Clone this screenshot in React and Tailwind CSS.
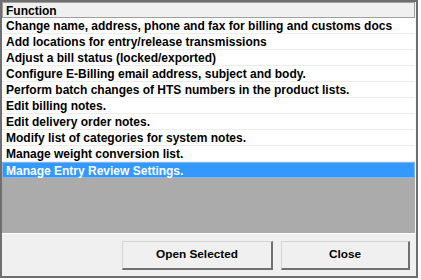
export default function App() {
  const rows = [
    "Change name, address, phone and fax for billing and customs docs",
    "Add locations for entry/release transmissions",
    "Adjust a bill status (locked/exported)",
    "Configure E-Billing email address, subject and body.",
    "Perform batch changes of HTS numbers in the product lists.",
    "Edit billing notes.",
    "Edit delivery order notes.",
    "Modify list of categories for system notes.",
    "Manage weight conversion list.",
    "Manage Entry Review Settings.",
  ];
  const font = { fontFamily: "Tahoma, 'Liberation Sans', 'DejaVu Sans', sans-serif" };
  return (
    <div className="w-[421px] h-[280px] bg-white">
      <div
        className="w-[418px] h-[278px] border-2 border-[#6f6f6f] bg-[#f0f0f0] flex flex-col text-[12px] font-bold text-black"
        style={font}
      >
        <div className="h-[231px] bg-[#ababab] flex flex-col border-r border-[#f6f6f6]">
          <div className="h-[16px] shrink-0 bg-[#f0f0f0] border border-[#a0a0a0] flex items-center pl-[3px] pt-[1px] leading-none">
            Function
          </div>
          {rows.map((r, i) => {
            const sel = i === rows.length - 1;
            return (
              <div
                key={i}
                className={
                  sel
                    ? "h-[16px] shrink-0 bg-[#3399ff] text-white flex items-center pl-[3px] pt-[1px] border border-[#7fb8f0] leading-none whitespace-nowrap"
                    : "h-[16px] shrink-0 bg-white flex items-center pl-[4px] pt-[1px] border-b border-[#ececec] leading-none whitespace-nowrap"
                }
              >
                {r}
              </div>
            );
          })}
        </div>
        <div className="h-[1px] bg-white" />
        <div className="flex-1 flex items-start justify-end pr-[6px] pt-[7px] gap-[8px]">
          <button
            className="w-[151px] h-[29px] bg-[#f0f0f0] border border-[#d4d4d4] border-r-2 border-b-2 border-r-[#707070] border-b-[#707070] font-bold text-[11.8px] text-black"
            style={font}
          >
            Open Selected
          </button>
          <button
            className="w-[129px] h-[29px] bg-[#f0f0f0] border border-[#d4d4d4] border-r-2 border-b-2 border-r-[#707070] border-b-[#707070] font-bold text-[11.8px] text-black"
            style={font}
          >
            Close
          </button>
        </div>
      </div>
    </div>
  );
}
